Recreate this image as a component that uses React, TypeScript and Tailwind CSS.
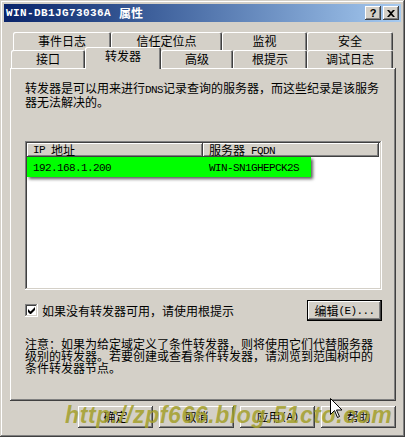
import React from "react";

const raised =
  "shadow-[inset_-1px_-1px_#404040,inset_1px_1px_#ffffff,inset_-2px_-2px_#808080,inset_2px_2px_#d4d0c8]";
const sunken =
  "shadow-[inset_-1px_-1px_#ffffff,inset_1px_1px_#808080,inset_-2px_-2px_#d4d0c8,inset_2px_2px_#404040]";
const cjk = "font-['Noto_Sans_CJK_SC',sans-serif]";
const lat = "font-['Liberation_Mono',monospace] text-[11px] tracking-[-0.6px]";

function L({ children }: { children: React.ReactNode }) {
  return <span className={lat}>{children}</span>;
}

function Tab({ w, label, selected }: { w: number; label: React.ReactNode; selected?: boolean }) {
  return (
    <div
      style={{ width: w }}
      className={
        selected
          ? "relative z-10 -mb-[1px] flex h-[22px] shrink-0 items-start justify-center rounded-t-[2px] bg-[#d4d0c8] pt-[3px] shadow-[inset_1px_1px_#ffffff,inset_-1px_0_#404040,inset_-2px_0_#808080]"
          : "flex h-[18px] shrink-0 items-start justify-center rounded-t-[2px] bg-[#d4d0c8] pt-[3px] shadow-[inset_1px_1px_#ffffff,inset_-1px_0_#404040,inset_-2px_0_#808080]"
      }
    >
      <span className="leading-[12px] text-[12px] text-black">{label}</span>
    </div>
  );
}

function Btn({ children, w, h, def }: { children: React.ReactNode; w: number; h: number; def?: boolean }) {
  return (
    <div
      style={{ width: w, height: h }}
      className={
        def
          ? "flex shrink-0 items-center justify-center border border-black bg-[#d4d0c8] shadow-[inset_-1px_-1px_#404040,inset_1px_1px_#ffffff,inset_-2px_-2px_#808080] text-[12px] leading-[12px] text-black"
          : `flex shrink-0 items-center justify-center bg-[#d4d0c8] ${raised} text-[12px] leading-[12px] text-black`
      }
    >
      {children}
    </div>
  );
}

export default function App() {
  return (
    <div className={`relative h-[437px] w-[405px] overflow-hidden bg-[#d4d0c8] ${cjk}`}>
      <div className="h-[437px] w-[405px] bg-[#d4d0c8] p-[4px] shadow-[inset_-1px_-1px_#404040,inset_1px_1px_#d4d0c8,inset_-2px_-2px_#808080,inset_2px_2px_#ffffff]">
        {/* title bar */}
        <div className="flex h-[18px] items-center bg-linear-to-r from-[#0a246a] to-[#a6caf0] pl-[2px] pr-[2px]">
          <div className="flex flex-1 items-center text-white">
            <span className="font-['Liberation_Mono',monospace] text-[11px] font-bold tracking-[0.4px]">
              WIN-DB1JG73036A
            </span>
            <span className="ml-[8px] text-[12px] font-bold leading-[12px]">属性</span>
          </div>
          <div className={`flex h-[14px] w-[16px] items-center justify-center bg-[#d4d0c8] ${raised}`}>
            <span className="font-['Liberation_Sans',sans-serif] text-[11px] font-bold leading-none text-black">?</span>
          </div>
          <div className={`ml-[2px] flex h-[14px] w-[16px] items-center justify-center bg-[#d4d0c8] ${raised}`}>
            <svg width="8" height="7" viewBox="0 0 8 7">
              <path d="M0 0h2l2 2 2-2h2L5 3.5 8 7H6L4 5 2 7H0l3-3.5z" fill="#000" />
            </svg>
          </div>
        </div>

        {/* tabs row 1 */}
        <div className="mt-[10px] ml-[9px] flex h-[18px]">
          <Tab w={98} label="事件日志" />
          <Tab w={111} label="信任定位点" />
          <Tab w={85} label="监视" />
          <Tab w={86} label="安全" />
        </div>
        {/* tabs row 2 */}
        <div className="ml-[7px] flex h-[18px] items-end">
          <Tab w={74} label="接口" />
          <Tab w={76} label="转发器" selected />
          <Tab w={72} label="高级" />
          <Tab w={74} label="根提示" />
          <Tab w={86} label="调试日志" />
        </div>

        {/* panel */}
        <div
          className={`ml-[6px] flex h-[333px] w-[386px] flex-col bg-[#d4d0c8] pl-[15px] pt-[14px] shadow-[inset_-1px_-1px_#404040,inset_1px_1px_#ffffff,inset_-2px_-2px_#808080] text-[12px] leading-[12px] text-black`}
        >
          <div>
            <div>
              转发器是可以用来进行<L>DNS</L>记录查询的服务器，而这些纪录是该服务
            </div>
            <div>器无法解决的。</div>
          </div>

          {/* list */}
          <div className={`mt-[33px] h-[149px] w-[357px] bg-white p-[2px] ${sunken}`}>
            <div className="flex h-[14px]">
              <div className={`flex h-[14px] w-[176px] items-center bg-[#d4d0c8] pl-[6px] ${raised}`}>
                <L>IP</L>
                <span className="ml-[6px]">地址</span>
              </div>
              <div className={`flex h-[14px] w-[176px] items-center bg-[#d4d0c8] pl-[6px] ${raised}`}>
                <span>服务器</span>
                <span className="ml-[6px]">
                  <L>FQDN</L>
                </span>
              </div>
            </div>
            <div className="flex h-[20px] w-[284px] items-center bg-[#00ff00] shadow-[2px_2px_3px_rgba(0,0,0,0.65)]">
              <div className="w-[182px] pl-[6px]">
                <L>192.168.1.200</L>
              </div>
              <div>
                <L>WIN-SN1GHEPCK2S</L>
              </div>
            </div>
          </div>

          {/* checkbox row */}
          <div className="mt-[10px] flex h-[21px] w-[357px] items-center justify-between">
            <div className="flex items-center">
              <div className={`flex h-[13px] w-[13px] items-center justify-center bg-white ${sunken}`}>
                <svg width="7" height="7" viewBox="0 0 7 7">
                  <path d="M0 2v3l2 2h1l4-4V0L2.5 4.5z" fill="#000" />
                </svg>
              </div>
              <span className="ml-[4px]">如果没有转发器可用，请使用根提示</span>
            </div>
            <Btn w={75} h={21} def>
              <span>编辑</span>
              <L>(E)...</L>
            </Btn>
          </div>

          {/* note */}
          <div className="mt-[17px]">
            <div>注意：如果为给定域定义了条件转发器，则将使用它们代替服务器</div>
            <div>级别的转发器。若要创建或查看条件转发器，请浏览到范围树中的</div>
            <div>条件转发器节点。</div>
          </div>
        </div>

        {/* bottom buttons */}
        <div className="mt-[5px] ml-[74px] flex gap-[6px]">
          <Btn w={75} h={22}>确定</Btn>
          <Btn w={75} h={22}>取消</Btn>
          <Btn w={75} h={22}>
            <span>应用</span>
            <L>(A)</L>
          </Btn>
          <Btn w={75} h={22}>帮助</Btn>
        </div>
      </div>

      {/* watermark */}
      <div className="pointer-events-none absolute left-[65px] top-[404px] whitespace-nowrap font-['Liberation_Sans',sans-serif] text-[23px] font-bold italic leading-none tracking-[0.6px] text-[#a39f2a]/85">
        http://zpf666.blog.51cto.com
      </div>

      {/* mouse cursor */}
      <svg className="absolute left-[330px] top-[398px]" width="12" height="20" viewBox="0 0 12 20">
        <path d="M0.5 0.5v16l4-4 3 7 2-1-3-6.5h5.5z" fill="#fff" stroke="#000" strokeWidth="1" />
      </svg>
    </div>
  );
}
